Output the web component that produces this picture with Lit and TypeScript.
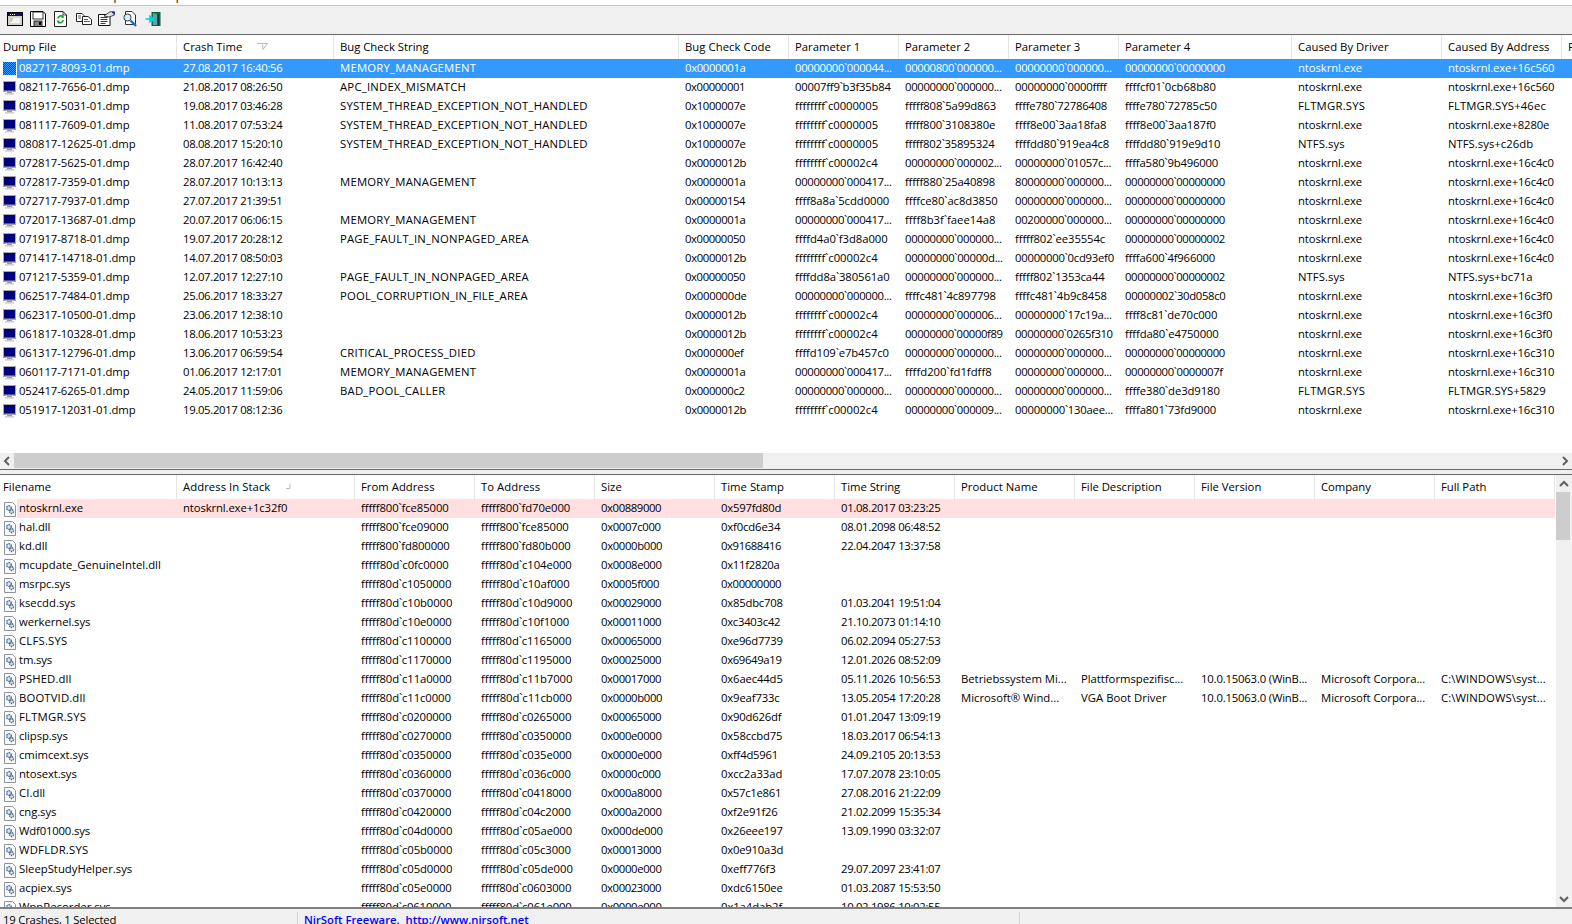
import { LitElement, html, css, svg } from "lit";
import { customElement } from "lit/decorators.js";

const Z = "00000000`000000...";
const E = "00000000`00000000";
const C5 = "ffffffff`c0000005";
const C4 = "ffffffff`c00002c4";
const MM = "MEMORY_MANAGEMENT";
const ST = "SYSTEM_THREAD_EXCEPTION_NOT_HANDLED";
const PF = "PAGE_FAULT_IN_NONPAGED_AREA";
const NT = "ntoskrnl.exe";
const FM = "FLTMGR.SYS";

const topCols = ["Dump File", "Crash Time", "Bug Check String", "Bug Check Code", "Parameter 1", "Parameter 2", "Parameter 3", "Parameter 4", "Caused By Driver", "Caused By Address", "File Description"];
const topRows: string[][] = [
  ["082717-8093-01.dmp", "27.08.2017 16:40:56", MM, "0x0000001a", "00000000`000044...", "00000800`000000...", Z, E, NT, NT + "+16c560"],
  ["082117-7656-01.dmp", "21.08.2017 08:26:50", "APC_INDEX_MISMATCH", "0x00000001", "00007ff9`b3f35b84", Z, "00000000`0000ffff", "ffffcf01`0cb68b80", NT, NT + "+16c560"],
  ["081917-5031-01.dmp", "19.08.2017 03:46:28", ST, "0x1000007e", C5, "fffff808`5a99d863", "ffffe780`72786408", "ffffe780`72785c50", FM, FM + "+46ec"],
  ["081117-7609-01.dmp", "11.08.2017 07:53:24", ST, "0x1000007e", C5, "fffff800`3108380e", "ffff8e00`3aa18fa8", "ffff8e00`3aa187f0", NT, NT + "+8280e"],
  ["080817-12625-01.dmp", "08.08.2017 15:20:10", ST, "0x1000007e", C5, "fffff802`35895324", "ffffdd80`919ea4c8", "ffffdd80`919e9d10", "NTFS.sys", "NTFS.sys+c26db"],
  ["072817-5625-01.dmp", "28.07.2017 16:42:40", "", "0x0000012b", C4, "00000000`000002...", "00000000`01057c...", "ffffa580`9b496000", NT, NT + "+16c4c0"],
  ["072817-7359-01.dmp", "28.07.2017 10:13:13", MM, "0x0000001a", "00000000`000417...", "fffff880`25a40898", "80000000`000000...", E, NT, NT + "+16c4c0"],
  ["072717-7937-01.dmp", "27.07.2017 21:39:51", "", "0x00000154", "ffff8a8a`5cdd0000", "ffffce80`ac8d3850", Z, E, NT, NT + "+16c4c0"],
  ["072017-13687-01.dmp", "20.07.2017 06:06:15", MM, "0x0000001a", "00000000`000417...", "ffff8b3f`faee14a8", "00200000`000000...", E, NT, NT + "+16c4c0"],
  ["071917-8718-01.dmp", "19.07.2017 20:28:12", PF, "0x00000050", "ffffd4a0`f3d8a000", Z, "fffff802`ee35554c", "00000000`00000002", NT, NT + "+16c4c0"],
  ["071417-14718-01.dmp", "14.07.2017 08:50:03", "", "0x0000012b", C4, "00000000`00000d...", "00000000`0cd93ef0", "ffffa600`4f966000", NT, NT + "+16c4c0"],
  ["071217-5359-01.dmp", "12.07.2017 12:27:10", PF, "0x00000050", "ffffdd8a`380561a0", Z, "fffff802`1353ca44", "00000000`00000002", "NTFS.sys", "NTFS.sys+bc71a"],
  ["062517-7484-01.dmp", "25.06.2017 18:33:27", "POOL_CORRUPTION_IN_FILE_AREA", "0x000000de", Z, "ffffc481`4c897798", "ffffc481`4b9c8458", "00000002`30d058c0", NT, NT + "+16c3f0"],
  ["062317-10500-01.dmp", "23.06.2017 12:38:10", "", "0x0000012b", C4, "00000000`000006...", "00000000`17c19a...", "ffff8c81`de70c000", NT, NT + "+16c3f0"],
  ["061817-10328-01.dmp", "18.06.2017 10:53:23", "", "0x0000012b", C4, "00000000`00000f89", "00000000`0265f310", "ffffda80`e4750000", NT, NT + "+16c3f0"],
  ["061317-12796-01.dmp", "13.06.2017 06:59:54", "CRITICAL_PROCESS_DIED", "0x000000ef", "ffffd109`e7b457c0", Z, Z, E, NT, NT + "+16c310"],
  ["060117-7171-01.dmp", "01.06.2017 12:17:01", MM, "0x0000001a", "00000000`000417...", "ffffd200`fd1fdff8", Z, "00000000`0000007f", NT, NT + "+16c310"],
  ["052417-6265-01.dmp", "24.05.2017 11:59:06", "BAD_POOL_CALLER", "0x000000c2", Z, Z, Z, "ffffe380`de3d9180", FM, FM + "+5829"],
  ["051917-12031-01.dmp", "19.05.2017 08:12:36", "", "0x0000012b", C4, "00000000`000009...", "00000000`130aee...", "ffffa801`73fd9000", NT, NT + "+16c310"],
];

const botCols = ["Filename", "Address In Stack", "From Address", "To Address", "Size", "Time Stamp", "Time String", "Product Name", "File Description", "File Version", "Company", "Full Path"];
const P = "fffff80d`";
const V = "10.0.15063.0 (WinB...";
const MC = "Microsoft Corpora...";
const W = "C:\\WINDOWS\\syst...";
const botRows: string[][] = [
  [NT, "ntoskrnl.exe+1c32f0", "fffff800`fce85000", "fffff800`fd70e000", "0x00889000", "0x597fd80d", "01.08.2017 03:23:25"],
  ["hal.dll", "", "fffff800`fce09000", "fffff800`fce85000", "0x0007c000", "0xf0cd6e34", "08.01.2098 06:48:52"],
  ["kd.dll", "", "fffff800`fd800000", "fffff800`fd80b000", "0x0000b000", "0x91688416", "22.04.2047 13:37:58"],
  ["mcupdate_GenuineIntel.dll", "", P + "c0fc0000", P + "c104e000", "0x0008e000", "0x11f2820a", ""],
  ["msrpc.sys", "", P + "c1050000", P + "c10af000", "0x0005f000", "0x00000000", ""],
  ["ksecdd.sys", "", P + "c10b0000", P + "c10d9000", "0x00029000", "0x85dbc708", "01.03.2041 19:51:04"],
  ["werkernel.sys", "", P + "c10e0000", P + "c10f1000", "0x00011000", "0xc3403c42", "21.10.2073 01:14:10"],
  ["CLFS.SYS", "", P + "c1100000", P + "c1165000", "0x00065000", "0xe96d7739", "06.02.2094 05:27:53"],
  ["tm.sys", "", P + "c1170000", P + "c1195000", "0x00025000", "0x69649a19", "12.01.2026 08:52:09"],
  ["PSHED.dll", "", P + "c11a0000", P + "c11b7000", "0x00017000", "0x6aec44d5", "05.11.2026 10:56:53", "Betriebssystem Mi...", "Plattformspezifisc...", V, MC, W],
  ["BOOTVID.dll", "", P + "c11c0000", P + "c11cb000", "0x0000b000", "0x9eaf733c", "13.05.2054 17:20:28", "Microsoft® Wind...", "VGA Boot Driver", V, MC, W],
  [FM, "", P + "c0200000", P + "c0265000", "0x00065000", "0x90d626df", "01.01.2047 13:09:19"],
  ["clipsp.sys", "", P + "c0270000", P + "c0350000", "0x000e0000", "0x58ccbd75", "18.03.2017 06:54:13"],
  ["cmimcext.sys", "", P + "c0350000", P + "c035e000", "0x0000e000", "0xff4d5961", "24.09.2105 20:13:53"],
  ["ntosext.sys", "", P + "c0360000", P + "c036c000", "0x0000c000", "0xcc2a33ad", "17.07.2078 23:10:05"],
  ["CI.dll", "", P + "c0370000", P + "c0418000", "0x000a8000", "0x57c1e861", "27.08.2016 21:22:09"],
  ["cng.sys", "", P + "c0420000", P + "c04c2000", "0x000a2000", "0xf2e91f26", "21.02.2099 15:35:34"],
  ["Wdf01000.sys", "", P + "c04d0000", P + "c05ae000", "0x000de000", "0x26eee197", "13.09.1990 03:32:07"],
  ["WDFLDR.SYS", "", P + "c05b0000", P + "c05c3000", "0x00013000", "0x0e910a3d", ""],
  ["SleepStudyHelper.sys", "", P + "c05d0000", P + "c05de000", "0x0000e000", "0xeff776f3", "29.07.2097 23:41:07"],
  ["acpiex.sys", "", P + "c05e0000", P + "c0603000", "0x00023000", "0xdc6150ee", "01.03.2087 15:53:50"],
  ["WppRecorder.sys", "", P + "c0610000", P + "c061e000", "0x0000e000", "0x1a4dab2f", "10.02.1986 10:02:55"],
];

/* The fallback face has wider digits and narrower capitals than the original UI font;
   this works out, per string, the tracking that brings its width back in line. */
const track = (s: string) => {
  if (!s) return "letter-spacing:0";
  let total = 0;
  for (const ch of s) {
    if (ch >= "0" && ch <= "9") total -= 0.42;
    else if (ch >= "a" && ch <= "f") total += 0.2;
    else if (ch >= "g" && ch <= "z") total -= 0.15;
    else if (ch >= "A" && ch <= "Z") total += 0.25;
    else if (ch === "-") total += 1.8;
  }
  return `letter-spacing:${(total / s.length).toFixed(3)}px`;
};

const monitor = (sel: boolean) => html`<svg class="ri" width="16" height="16" viewBox="0 0 16 16">
  <defs><pattern id="dith" width="2" height="2" patternUnits="userSpaceOnUse"><rect width="2" height="2" fill="#0f3fc0"/><rect width="1" height="1" fill="#3399ff"/><rect x="1" y="1" width="1" height="1" fill="#3399ff"/></pattern></defs>
  ${sel
    ? svg`<rect x="2" y="1" width="13" height="13" fill="url(#dith)"/>`
    : svg`<rect x="2" y="1" width="13" height="11" fill="#a9a9a9"/><rect x="3" y="2" width="11" height="8.5" fill="#00007f"/><rect x="6" y="12" width="5" height="1" fill="#9a9a9a"/><rect x="4" y="13" width="9" height="1.6" fill="#cfcfcf"/>`}
</svg>`;

const docIcon = html`<svg class="ri" width="16" height="16" viewBox="0 0 16 16">
  <path d="M3.5 1.5H11.5L14.5 4.5V15.5H3.5Z" fill="#fbfbfb" stroke="#8d949c"/>
  <circle cx="8" cy="7" r="2.3" fill="#dbe6f2" stroke="#4f78a8" stroke-width="1.5" stroke-dasharray="1.6 .7"/>
  <circle cx="10.6" cy="10.6" r="1.9" fill="#dbe6f2" stroke="#456a90" stroke-width="1.4" stroke-dasharray="1.4 .7"/>
</svg>`;

const toolIcons = [
  html`<svg width="16" height="14" viewBox="0 0 16 14"><rect x=".5" y=".5" width="15" height="13" fill="#e8e4d8" stroke="#000"/><rect x="1" y="1" width="14" height="3" fill="#10106c"/><path d="M3 2.5h5" stroke="#fff" stroke-dasharray="1 1"/><rect x="2" y="5" width="12" height="7" fill="#f4f2ea" stroke="#8a8a8a" stroke-width=".5"/><path d="M3 7h3M3 9h2" stroke="#9a9a9a"/></svg>`,
  html`<svg width="16" height="16" viewBox="0 0 16 16"><path d="M.5.5H13L15.5 3V15.5H.5Z" fill="#fff" stroke="#000"/><rect x="3" y="1" width="10" height="7" fill="#fff" stroke="#000" stroke-width=".8"/><rect x="4" y="10" width="8" height="5.5" fill="#8a8a8a" stroke="#000" stroke-width=".8"/><rect x="9" y="11" width="2" height="3" fill="#000"/></svg>`,
  html`<svg width="13" height="16" viewBox="0 0 13 16"><path d="M.5.5H9L12.5 4V15.5H.5Z" fill="#fff" stroke="#222"/><path d="M9 .5V4H12.5" fill="none" stroke="#222" stroke-width=".8"/><path d="M4 7.5A3 3 0 0 1 9 5.5M9 9A3 3 0 0 1 4 11" fill="none" stroke="#159a2c" stroke-width="1.6"/><path d="M8 3.5L10.5 6.5L7.5 7ZM5 13L2.5 9.5L5.5 9.5Z" fill="#159a2c"/></svg>`,
  html`<svg width="16" height="12" viewBox="0 0 16 12"><path d="M.5.5H6L8 2.5V8.5H.5Z" fill="#fff" stroke="#222"/><path d="M6.5 3.5H12L15.5 6.5V11.5H6.5Z" fill="#fff" stroke="#222"/><path d="M2 3h3M2 5h3M8 6.5h4M8 8.5h6" stroke="#333" stroke-width=".8"/></svg>`,
  html`<svg width="17" height="15" viewBox="0 0 17 15"><path d="M.5 3.5H12V14.5H.5Z" fill="#fff" stroke="#111"/><path d="M2.5 6.5h7M2.5 8.5h7M2.5 10.5h7M2.5 12.5h5" stroke="#222" stroke-width=".9"/><path d="M6 5L12 .8L16.5 .8L16.5 4L11 6Z" fill="#dfe6ee" stroke="#222" stroke-width=".8"/><path d="M14 1.5l2 0v2" stroke="#1a2f8a" stroke-width="1.4" fill="none"/></svg>`,
  html`<svg width="16" height="16" viewBox="0 0 16 16"><path d="M3.5.5H10L13.5 4V13.5H3.5Z" fill="#fff" stroke="#333"/><circle cx="5.5" cy="6.5" r="3.6" fill="#cfeeff" stroke="#3b3b3b"/><path d="M8.5 9.5L14 15" stroke="#1e6fd0" stroke-width="2.4"/></svg>`,
  html`<svg width="16" height="14" viewBox="0 0 16 14"><rect x="7" y=".5" width="8" height="13" fill="#0a6e6e" stroke="#063"/><path d="M8 1L13 2.5V13L8 13Z" fill="#5aa5a5"/><path d="M13 2v11" stroke="#111" stroke-width="1.2"/><path d="M.5 7H5M5 4.2L9 7L5 9.8Z" stroke="#00d0e0" fill="#00d0e0" stroke-width="1.6"/></svg>`,
];

const chevron = (d: string) => html`<svg class="chev" width="10" height="10" viewBox="0 0 10 10"><path d=${d} fill="none" stroke="#606060" stroke-width="2"/></svg>`;

@customElement("app-root")
export class AppRoot extends LitElement {
  static styles = css`
    :host {
      display: flex;
      flex-direction: column;
      width: 1572px;
      height: 924px;
      overflow: hidden;
      background: #fff;
      font-family: "Open Sans", "Noto Sans", sans-serif;
      font-size: 11.3px;
      color: #000;
    }
    .menu {
      flex: 0 0 5px;
      overflow: hidden;
      display: flex;
      padding-left: 6px;
      gap: 12px;
      line-height: 15px;
    }
    .menu span { margin-top: -12px; height: 15px; }
    .rule { flex: 0 0 1px; background: #c8c8c8; }
    .toolbar {
      flex: 0 0 28px;
      background: #f0f0f0;
      border-bottom: 1px solid #696969;
      box-sizing: content-box;
      display: flex;
      align-items: center;
      padding-left: 3px;
      padding-bottom: 0;
    }
    .tb { flex: 0 0 23px; height: 16px; display: flex; align-items: center; justify-content: center; margin-bottom: 3px; }
    .list { overflow: hidden; background: #fff; }
    .top { flex: 0 0 418px; }
    .grid-top {
      display: grid;
      grid-template-columns: 177px 157px 345px 110px 110px 110px 110px 173px 150px 120px 120px;
      width: max-content;
    }
    .grid-bot {
      display: grid;
      grid-template-columns: 177px 178px repeat(10, 120px);
      width: max-content;
    }
    .hdr { height: 24px; align-items: center; }
    .hc {
      height: 24px;
      display: flex;
      align-items: center;
      padding: 0 0 2px 6px;
      border-right: 1px solid #e5e5e5;
      box-sizing: border-box;
      white-space: nowrap;
      overflow: hidden;
    }
    .hc:first-child { padding-left: 3px; }
    .sort { margin-left: 15px; letter-spacing: 0; }
    .row { height: 19px; line-height: 17px; }
    .c {
      padding-left: 6px;
      white-space: nowrap;
      overflow: hidden;
      height: 19px;
    }
    .first { padding-left: 0; display: flex; }
    .ri { flex: 0 0 16px; margin: 2px 0 1px 1px; }
    .name { flex: 1; padding-left: 2px; }
    .sel .c:not(.first), .sel .name { background: #3399ff; color: #fff; }
    .pink .c:not(.first), .pink .name { background: #ffdfdf; }
    .hbar {
      flex: 0 0 16px;
      display: flex;
      background: #f0f0f0;
      align-items: stretch;
    }
    .hbtn { flex: 0 0 14px; display: flex; align-items: center; justify-content: center; }
    .hthumb { flex: 0 0 749px; background: #cdcdcd; margin-bottom: 1px; }
    .hrest { flex: 1; }
    .sep { flex: 0 0 6px; box-sizing: border-box; background: #f0f0f0; border-top: 1px solid #696969; border-bottom: 1px solid #696969; }
    .lower { flex: 0 0 432px; display: flex; overflow: hidden; }
    .bot { flex: 0 0 1555px; }
    .vbar { flex: 1; margin-left: 1px; background: #f0f0f0; display: flex; flex-direction: column; }
    .vbtn { flex: 0 0 17px; display: flex; align-items: center; justify-content: center; }
    .vthumb { flex: 0 0 48px; background: #cdcdcd; margin-right: 2px; }
    .vrest { flex: 1; }
    .status {
      flex: 1;
      background: #f0f0f0;
      border-top: 2px solid #808080;
      display: flex;
      line-height: 15px;
      padding-top: 3px;
      overflow: hidden;
    }
    .s1 { flex: 0 0 298px; padding-left: 3px; border-right: 1px solid #d4d4d4; box-sizing: border-box; letter-spacing: -0.2px; }
    .s2 { flex: 0 0 722px; padding-left: 6px; border-right: 1px solid #d4d4d4; box-sizing: border-box; color: #0000ff; font-weight: 600; font-size: 11.3px; white-space: pre; }
  `;

  render() {
    return html`
      <div class="menu"><span>File</span><span>Edit</span><span>View</span><span>Options</span><span>Help</span></div>
      <div class="rule"></div>
      <div class="toolbar">${toolIcons.map((i) => html`<div class="tb">${i}</div>`)}</div>

      <div class="list top">
        <div class="grid-top hdr">
          ${topCols.map((c, i) => html`<div class="hc" style=${track(c)}>${c}${i === 1
            ? html`<svg class="sort" width="11" height="7" viewBox="0 0 11 7"><path d="M0 .5H10.5L6 6.5L5.5 1.5" fill="none" stroke="#b8b8b8"/></svg>`
            : ""}</div>`)}
        </div>
        ${topRows.map((r, ri) => html`<div class="grid-top row ${ri === 0 ? "sel" : ""}">
          <div class="c first">${monitor(ri === 0)}<div class="name" style=${track(r[0])}>${r[0]}</div></div>
          ${r.slice(1).map((v) => html`<div class="c" style=${track(v)}>${v}</div>`)}
          ${ri === 0 ? html`<div class="c"></div>` : ""}
        </div>`)}
      </div>
      <div class="hbar">
        <div class="hbtn">${chevron("M7 1L3 5L7 9")}</div>
        <div class="hthumb"></div>
        <div class="hrest"></div>
        <div class="hbtn">${chevron("M3 1L7 5L3 9")}</div>
      </div>
      <div class="sep"></div>

      <div class="lower">
        <div class="list bot">
          <div class="grid-bot hdr">
            ${botCols.map((c, i) => html`<div class="hc" style=${track(c)}>${c}${i === 1
              ? html`<svg class="sort" width="6" height="6" viewBox="0 0 6 6"><path d="M5 .5V5.5H1" fill="none" stroke="#b8b8b8"/></svg>`
              : ""}</div>`)}
          </div>
          ${botRows.map((r, ri) => html`<div class="grid-bot row ${ri === 0 ? "pink" : ""}">
            <div class="c first">${docIcon}<div class="name" style=${track(r[0])}>${r[0]}</div></div>
            ${botCols.slice(1).map((_, i) => html`<div class="c" style=${track(r[i + 1] ?? "")}>${r[i + 1] ?? ""}</div>`)}
          </div>`)}
        </div>
        <div class="vbar">
          <div class="vbtn">${chevron("M1 7L5 3L9 7")}</div>
          <div class="vthumb"></div>
          <div class="vrest"></div>
          <div class="vbtn">${chevron("M1 3L5 7L9 3")}</div>
        </div>
      </div>
      <div class="status">
        <div class="s1">19 Crashes, 1 Selected</div>
        <div class="s2">NirSoft Freeware.  http://www.nirsoft.net</div>
      </div>
    `;
  }
}
